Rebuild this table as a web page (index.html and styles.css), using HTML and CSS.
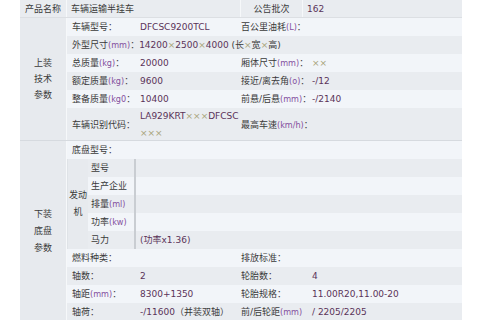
FILE: index.html
```html
<!DOCTYPE html>
<html lang="zh">
<head>
<meta charset="utf-8">
<title>车辆参数</title>
<link rel="stylesheet" href="styles.css">
</head>
<body>
<div class="sheet">
  <div class="top">
    <div class="t-l">产品名称</div>
    <div class="t-v">车辆运输半挂车</div>
    <div class="t-l2">公告批次</div>
    <div class="t-v2"><span class="n">162</span></div>
  </div>

  <div class="sec">
    <div class="side">上装<br>技术<br>参数</div>
    <div class="rows">
      <div class="row lt">
        <div class="lb">车辆型号：</div>
        <div class="vl"><span class="n">DFCSC9200TCL</span></div>
        <div class="lb">百公里油耗<span class="u">(L)</span>：</div>
        <div class="vl"></div>
      </div>
      <div class="row dk">
        <div class="lb wide">外型尺寸<span class="u">(mm)</span>：<span class="n">14200</span><span class="x">×</span><span class="n">2500</span><span class="x">×</span><span class="n">4000</span> (长<span class="x">×</span>宽<span class="x">×</span>高)</div>
      </div>
      <div class="row lt">
        <div class="lb">总质量<span class="u">(kg)</span>：</div>
        <div class="vl"><span class="n">20000</span></div>
        <div class="lb">厢体尺寸<span class="u">(mm)</span>：</div>
        <div class="vl"><span class="x">××</span></div>
      </div>
      <div class="row dk">
        <div class="lb">额定质量<span class="u">(kg)</span>：</div>
        <div class="vl"><span class="n">9600</span></div>
        <div class="lb">接近/离去角<span class="u">(o)</span>：</div>
        <div class="vl"><span class="n">-/12</span></div>
      </div>
      <div class="row lt">
        <div class="lb">整备质量<span class="u">(kg0</span>：</div>
        <div class="vl"><span class="n">10400</span></div>
        <div class="lb">前悬/后悬<span class="u">(mm)</span>：</div>
        <div class="vl"><span class="n">-/2140</span></div>
      </div>
      <div class="row dk tall">
        <div class="lb">车辆识别代码：</div>
        <div class="vl vin"><span class="n">LA929KRT</span><span class="x">×××</span><span class="n">DFCSC</span><br><span class="x">×××</span></div>
        <div class="lb">最高车速<span class="u">(km/h)</span>：</div>
        <div class="vl"></div>
      </div>
    </div>
  </div>

  <div class="sec sec2">
    <div class="side">下装<br>底盘<br>参数</div>
    <div class="rows">
      <div class="row lt">
        <div class="lb">底盘型号：</div>
      </div>
      <div class="engine">
        <div class="eng-side">发动机</div>
        <div class="eng-rows">
          <div class="erow dk"><div class="el">型号</div><div class="ev"></div></div>
          <div class="erow lt"><div class="el">生产企业</div><div class="ev"></div></div>
          <div class="erow dk"><div class="el">排量<span class="u">(ml)</span></div><div class="ev"></div></div>
          <div class="erow lt"><div class="el">功率<span class="u">(kw)</span></div><div class="ev"></div></div>
          <div class="erow dk"><div class="el">马力</div><div class="ev"><span class="n">(功率x1.36)</span></div></div>
        </div>
      </div>
      <div class="row lt">
        <div class="lb">燃料种类：</div>
        <div class="vl"></div>
        <div class="lb">排放标准：</div>
        <div class="vl"></div>
      </div>
      <div class="row dk">
        <div class="lb">轴数：</div>
        <div class="vl"><span class="n">2</span></div>
        <div class="lb">轮胎数：</div>
        <div class="vl"><span class="n">4</span></div>
      </div>
      <div class="row lt">
        <div class="lb">轴距<span class="u">(mm)</span>：</div>
        <div class="vl"><span class="n">8300+1350</span></div>
        <div class="lb">轮胎规格：</div>
        <div class="vl"><span class="n">11.00R20,11.00-20</span></div>
      </div>
      <div class="row dk last">
        <div class="lb">轴荷：</div>
        <div class="vl"><span class="n">-/11600</span>（并装双轴）</div>
        <div class="lb">前/后轮距<span class="u">(mm)</span></div>
        <div class="vl"><span class="n">/ 2205/2205</span></div>
      </div>
    </div>
  </div>
</div>
</body>
</html>
```

FILE: styles.css
```css
* { box-sizing: border-box; }

html, body {
  margin: 0;
  padding: 0;
  background: #ffffff;
}

body {
  font-family: "DejaVu Sans", "Noto Sans CJK SC", sans-serif;
  font-size: 9px;
  color: #3a3a3a;
}

.sheet {
  margin-left: 20px;
  width: 442px;
  background: #e9ecf0;
}

.top {
  display: flex;
  height: 18px;
  line-height: 18px;
  border-bottom: 1px solid #dcdfe3;
  background: #e9ecf0;
}

.t-l {
  width: 47px;
  text-align: center;
  border-right: 1px solid #f6f8fa;
}

.t-v {
  width: 174px;
  padding-left: 4px;
  border-right: 1px solid #f6f8fa;
}

.t-l2 {
  width: 62px;
  text-align: center;
  border-right: 1px solid #f6f8fa;
}

.t-v2 {
  flex: 1;
  padding-left: 4px;
}

.sec {
  display: flex;
}

.sec2 {
  border-top: 1px solid #d6dadf;
}

.side {
  width: 47px;
  flex: none;
  display: flex;
  align-items: center;
  justify-content: center;
  text-align: center;
  line-height: 16px;
  background: #e7eaee;
  border-right: 1px solid #f6f8fa;
}

.sec2 .side {
  line-height: 17px;
}

.rows {
  flex: 1;
}

.row {
  display: grid;
  grid-template-columns: 68px 101px 71px 1fr;
  align-items: center;
  height: 18px;
  line-height: 16px;
}

.row.tall {
  height: 32px;
}

.row.last {
  border-bottom: 1px solid #d6dadf;
}

.dk { background: #e9ecf0; }
.lt { background: #f2f5f9; }

.lb {
  padding-left: 5px;
  white-space: nowrap;
}

.lb.wide {
  grid-column: 1 / -1;
}

.vl {
  padding-left: 5px;
  white-space: nowrap;
}

.vl.vin {
  line-height: 17px;
}

.u {
  color: #84509e;
  font-family: "DejaVu Sans Condensed", "DejaVu Sans", sans-serif;
}
.n { color: #5a3358; }
.x { color: #a8a47a; }

.engine {
  display: flex;
  border-left: 1px solid #dfe3e7;
}

.eng-side {
  width: 20px;
  flex: none;
  display: flex;
  align-items: center;
  justify-content: center;
  text-align: center;
  line-height: 17px;
  background: #e7eaee;
}

.eng-rows {
  flex: 1;
}

.erow {
  display: flex;
  height: 18px;
  line-height: 18px;
}

.el {
  width: 48px;
  flex: none;
  padding-left: 3px;
  white-space: nowrap;
  border-right: 2px solid #c9cdd2;
}

.ev {
  flex: 1;
  padding-left: 4px;
}
```
